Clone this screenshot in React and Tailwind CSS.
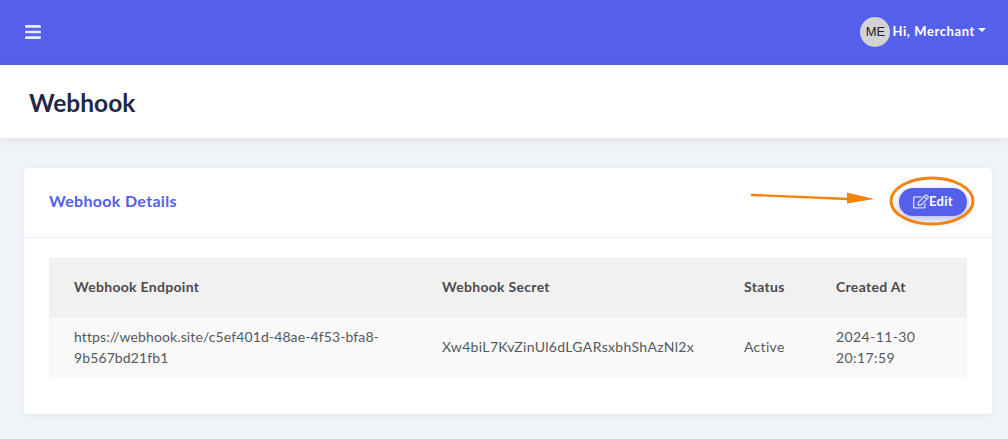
import { FaBars, FaRegEdit } from 'react-icons/fa'

export default function App() {
  return (
    <div className="h-[439px] overflow-hidden bg-[#f0f3f7] font-['Lato','Open_Sans',sans-serif] text-[14px] text-[#55585e]">
      <header className="h-[65px] bg-[#5460eb] flex items-center justify-between pl-[25px] pr-[22px] pb-[2px]">
        <FaBars className="w-[16px] h-[18px] text-[#e8eafc]" />
        <div className="flex items-center gap-[3px] text-white">
          <span className="w-[30px] h-[30px] mr-[-1px] rounded-full bg-[#d3d3d3] text-[#222] text-[13px] flex items-center justify-center font-['Liberation_Sans',sans-serif]">ME</span>
          <span className="text-[13px] font-bold tracking-[0.6px]">Hi, Merchant</span>
          <span className="border-x-[4.5px] border-x-transparent border-t-[4.5px] border-t-white mb-[3px]"></span>
        </div>
      </header>

      <section className="h-[73px] bg-white flex items-center pl-[29px] pt-[3px] shadow-[0_2px_10px_rgba(30,40,80,0.08)]">
        <h1 className="text-[24.5px] font-bold text-[#232745] leading-none">Webhook</h1>
      </section>

      <main className="pl-[24px] pr-[16px] pt-[30px]">
        <div className="relative h-[246px] bg-white rounded-[4px] shadow-[0_1px_6px_rgba(30,40,80,0.06)]">
          <div className="h-[70px] border-b border-[#f1f2f5] flex items-center justify-between pl-[25px] pr-[25px]">
            <h2 className="text-[16px] font-bold text-[#5460eb] tracking-[0.33px] mb-[4px]">Webhook Details</h2>
            <button className="w-[68px] h-[28px] mb-[2px] rounded-full bg-[#5460eb] text-white text-[13px] font-bold tracking-[0.3px] flex items-center justify-center shadow-[0_3px_8px_rgba(84,96,235,0.45)]">
              <FaRegEdit className="w-[16px] h-[15px] text-[#d5d9fb]" />
              Edit
            </button>
          </div>

          <svg className="absolute left-[726px] top-[8px]" width="226" height="54" viewBox="0 0 226 54" fill="none">
            <path d="M2 19 L98 23" stroke="#f5820d" strokeWidth="2.4" strokeLinecap="round" />
            <path d="M97 16.5 L124 23 L97 27.5 Z" fill="#f5820d" />
            <ellipse cx="182" cy="25" rx="41" ry="23" stroke="#f5820d" strokeWidth="3" />
          </svg>

          <div className="px-[25px] pt-[20px]">
            <table className="w-[918px] table-fixed border-collapse text-left">
              <colgroup>
                <col className="w-[368px]" />
                <col className="w-[302px]" />
                <col className="w-[92px]" />
                <col className="w-[156px]" />
              </colgroup>
              <thead className="bg-[#f1f1f2]">
                <tr className="h-[60px] font-bold text-[#4a4a4d] tracking-[0.3px]">
                  <th className="pl-[25px] pb-[4px]">Webhook Endpoint</th>
                  <th className="pl-[25px] pb-[4px]">Webhook Secret</th>
                  <th className="pl-[25px] pb-[4px]">Status</th>
                  <th className="pl-[25px] pb-[4px]">Created At</th>
                </tr>
              </thead>
              <tbody>
                <tr className="h-[60px] bg-[#f9f9fa] leading-[21px]">
                  <td className="pl-[25px] pr-[25px] pb-[2px] tracking-[0.11px]">https://webhook.site/c5ef401d-48ae-4f53-bfa8-9b567bd21fb1</td>
                  <td className="pl-[25px] pb-[4px] tracking-[0.33px]">Xw4biL7KvZinUl6dLGARsxbhShAzNl2x</td>
                  <td className="pl-[25px] pb-[4px] tracking-[0.3px]">Active</td>
                  <td className="pl-[25px] pr-[40px] pb-[2px] tracking-[0.4px]">2024-11-30 20:17:59</td>
                </tr>
              </tbody>
            </table>
          </div>
        </div>
      </main>
    </div>
  )
}
